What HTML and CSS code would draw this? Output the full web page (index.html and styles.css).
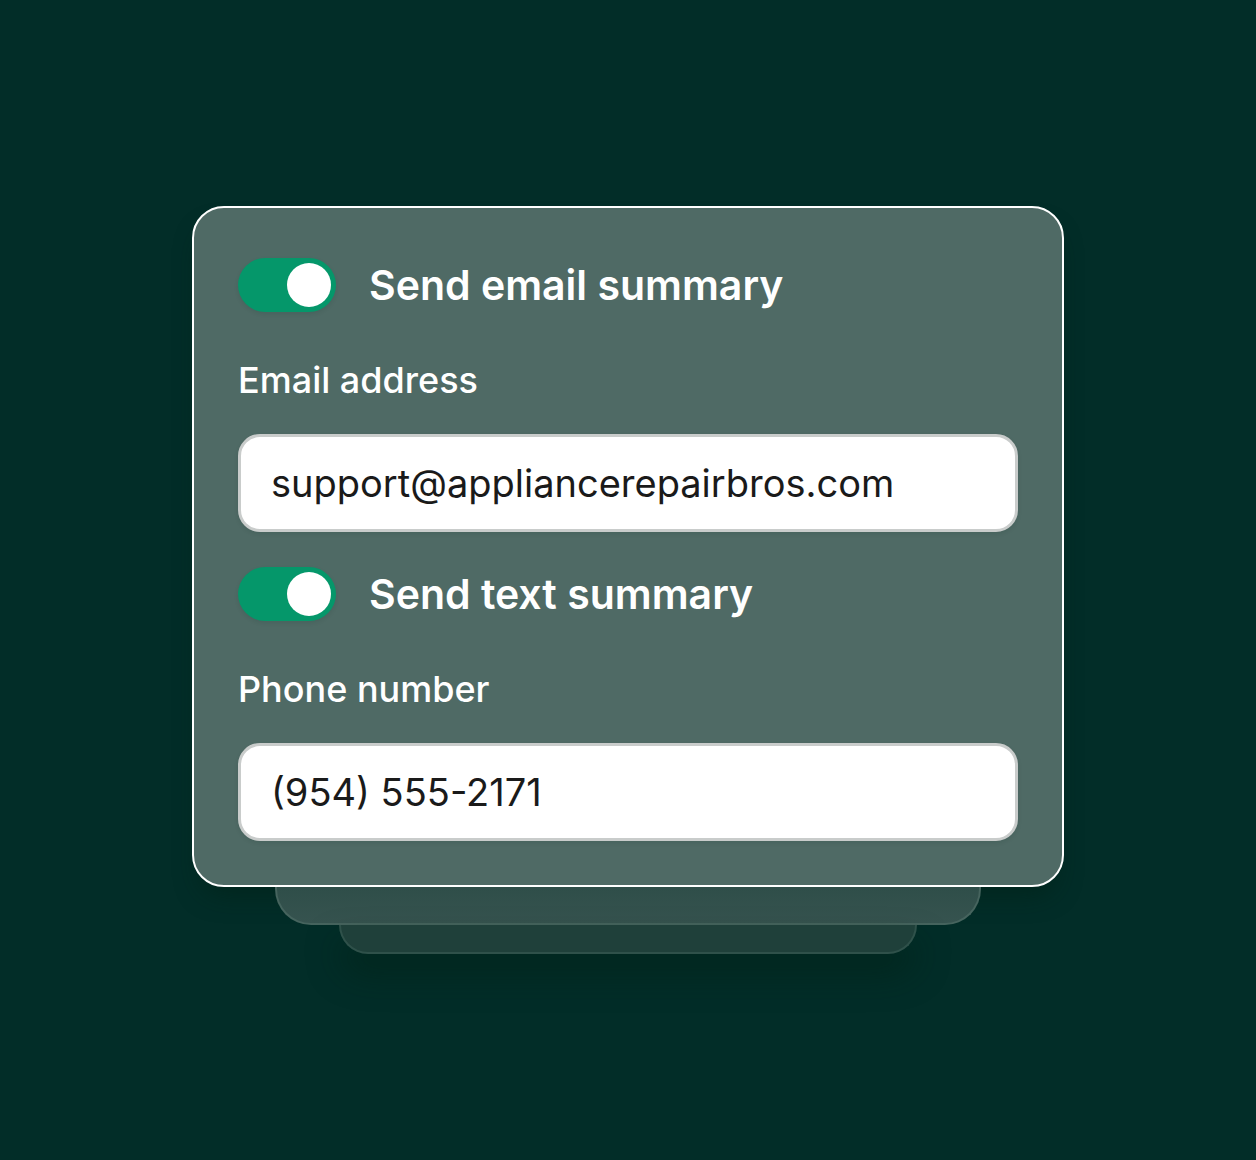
FILE: index.html
```html
<!DOCTYPE html>
<html lang="en">
<head>
<meta charset="utf-8">
<meta name="viewport" content="width=device-width, initial-scale=1">
<title>Summary notifications</title>
<link rel="stylesheet" href="styles.css">
</head>
<body>
<main class="stage">
  <div class="stack">
    <form class="card">
      <label class="toggle">
        <input class="toggle-input" type="checkbox" role="switch" checked>
        <span class="toggle-label">Send email summary</span>
      </label>
      <label class="field-label" for="email">Email address</label>
      <input class="field" id="email" type="email" value="support@appliancerepairbros.com">
      <label class="toggle">
        <input class="toggle-input" type="checkbox" role="switch" checked>
        <span class="toggle-label">Send text summary</span>
      </label>
      <label class="field-label" for="phone">Phone number</label>
      <input class="field" id="phone" type="tel" value="(954) 555-2171">
    </form>
    <div class="sheet sheet-middle"></div>
    <div class="sheet sheet-back"></div>
  </div>
</main>
</body>
</html>
```

FILE: styles.css
```css
* {
  box-sizing: border-box;
}

body {
  margin: 0;
  background: #022d28;
  color: #fff;
  font-family: Inter, "Liberation Sans", sans-serif;
}

.stage {
  display: flex;
  min-height: 100vh;
  align-items: center;
  justify-content: center;
  padding: 32px;
}

.stack {
  display: flex;
  flex-direction: column;
  align-items: center;
  width: 100%;
  max-width: 872px;
}

.card {
  display: flex;
  flex-direction: column;
  width: 100%;
  padding: 44px;
  border: 2px solid #fff;
  border-radius: 32px;
  background: #4f6a65;
  box-shadow: 0 16px 24px -8px rgba(2, 32, 20, 0.5);
}

.toggle {
  display: flex;
  align-items: center;
  gap: 33px;
  height: 66px;
}

.toggle-input {
  appearance: none;
  flex: none;
  display: flex;
  align-items: center;
  justify-content: flex-end;
  width: 98px;
  height: 54px;
  margin: 0;
  padding: 5px;
  border-radius: 27px;
  background: #05976a;
  box-shadow: 0 2px 4px rgba(0, 40, 30, 0.1);
}

.toggle-input:not(:checked) {
  justify-content: flex-start;
  background: #8a9a97;
}

.toggle-input::before {
  content: "";
  width: 44px;
  height: 44px;
  border-radius: 50%;
  background: #fff;
}

.toggle-label {
  font-size: 41px;
  font-weight: 600;
  line-height: 60px;
}

.field-label {
  margin: 34px 0 26px;
  font-size: 36px;
  font-weight: 500;
  line-height: 56px;
}

.field {
  width: 100%;
  height: 98px;
  padding: 0 30px;
  border: 3px solid #c9cccb;
  border-radius: 22px;
  background: #fff;
  color: #1a1a1a;
  font: 400 38px/48px Inter, "Liberation Sans", sans-serif;
  box-shadow: 0 2px 4px rgba(0, 40, 30, 0.1);
}

.field + .toggle {
  margin-top: 29px;
}

.sheet {
  border: 2px solid #46645e;
  border-top: 0;
}

.sheet-middle {
  width: calc(100% - 166px);
  height: 38px;
  border-radius: 0 0 36px 36px;
  background: linear-gradient(#2f4e49, #36534f);
}

.sheet-back {
  width: calc(100% - 294px);
  height: 29px;
  border-color: #2f514a;
  border-radius: 0 0 30px 30px;
  background: #1f403a;
  box-shadow: 0 20px 32px rgba(2, 32, 20, 0.5);
}
```
